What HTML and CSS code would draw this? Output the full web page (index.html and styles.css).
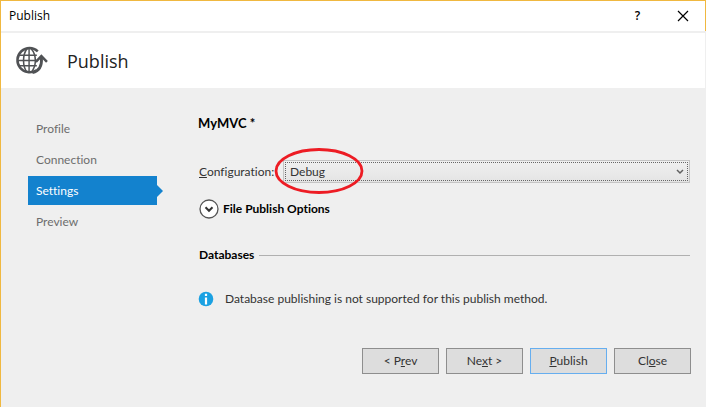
FILE: index.html
```html
<!DOCTYPE html>
<html lang="en">
<head>
<meta charset="utf-8">
<title>Publish</title>
<link rel="stylesheet" href="styles.css">
</head>
<body>
<div class="window">
  <div class="titlebar">
    <span class="titlebar-text">Publish</span>
    <button class="caption-button help" type="button">?</button>
    <button class="caption-button" type="button" aria-label="Close window">
      <svg width="12" height="12" viewBox="0 0 12 12"><path d="M1 1l10 10M11 1L1 11" stroke="#000" stroke-width="1.2" fill="none"/></svg>
    </button>
  </div>
  <header class="header">
    <svg class="globe" width="34" height="30" viewBox="0 0 34 30" fill="none" stroke="#505255">
      <path d="M23.500 5.500A12.500 12.500 0 1 0 22 25" stroke-width="2.600"/>
      <path d="M12.500 2.500C7.500 9 7.500 21 12.500 27.500M16.500 2.500c3.500 4 4.500 8 4.500 12.500s-1.500 9-4.500 12.500" stroke-width="1.600"/>
      <path d="M3.500 9.500h19M2 15h21M3.500 20.500h19M14.500 2v26" stroke-width="1.500"/>
      <path d="M18 27.500c6.500-1.500 10-7 9.300-15.500" stroke-width="2.900"/>
      <path d="M21.500 16.500l5.700-6 5.800 6" stroke-width="2.600"/>
    </svg>
    <h1>Publish</h1>
  </header>
  <div class="body">
    <nav class="steps">
      <a href="#profile">Profile</a>
      <a href="#connection">Connection</a>
      <a href="#settings" class="active" aria-current="step">Settings</a>
      <a href="#preview">Preview</a>
    </nav>
    <main class="content">
      <h2>MyMVC *</h2>
      <div class="field">
        <label for="configuration"><u>C</u>onfiguration:</label>
        <div class="select-box">
          <select id="configuration"><option>Debug</option><option>Release</option></select>
          <svg class="chevron" width="8" height="6" viewBox="0 0 8 6"><path d="M1 1l3 3 3-3" fill="none" stroke="#606060" stroke-width="1.500"/></svg>
          <svg class="marker" width="90" height="48" viewBox="0 0 90 48"><ellipse cx="45" cy="24" rx="43" ry="21.500" fill="none" stroke="#ed1c24" stroke-width="2.800"/></svg>
        </div>
      </div>
      <button class="expander" type="button" aria-expanded="false">
        <svg width="20" height="20" viewBox="0 0 20 20" fill="none"><circle cx="10" cy="10" r="9" fill="#fff" stroke="#555" stroke-width="1.300"/><path d="M6.500 8.300l3.500 3.500 3.500-3.500" stroke="#333" stroke-width="2"/></svg>
        <span>File Publish Options</span>
      </button>
      <h3>Databases</h3>
      <p class="notice">
        <svg width="16" height="16" viewBox="0 0 16 16"><circle cx="8" cy="8" r="7.300" fill="#1ba1e2"/><path d="M8 2.700v2.300M8 6.500v7" stroke="#fff" stroke-width="2.200"/></svg>
        <span>Database publishing is not supported for this publish method.</span>
      </p>
    </main>
  </div>
  <footer class="actions">
    <button type="button">&lt; P<u>r</u>ev</button>
    <button type="button">Ne<u>x</u>t &gt;</button>
    <button type="button" class="default"><u>P</u>ublish</button>
    <button type="button">Cl<u>o</u>se</button>
  </footer>
</div>
</body>
</html>
```
FILE: styles.css
```css
* { box-sizing: border-box; }
body {
  margin: 0;
  font: 12px/16px Lato, "Open Sans", sans-serif;
  font-variant-ligatures: none;
  color: #333;
  background: #efefef;
}
button, select { font: inherit; color: inherit; }
h1, h2, h3, p { margin: 0; }
u { text-underline-offset: 1px; }

.window {
  min-height: 100vh;
  border-left: 1px solid #f0b840;
}
.titlebar {
  display: flex;
  align-items: center;
  height: 31px;
  padding-left: 8px;
  background: #fff;
  border-top: 1px solid #f0b840;
  border-right: 1px solid #f0b840;
  font-family: "Open Sans", sans-serif;
  color: #000;
}
.titlebar-text { flex: 1; }
.caption-button {
  display: grid;
  place-items: center;
  width: 45px;
  height: 28px;
  padding: 0;
  border: 0;
  background: none;
}
.help { font-weight: 600; }
.header {
  display: flex;
  align-items: center;
  gap: 18px;
  height: 57px;
  margin-right: 1px;
  padding-left: 14px;
  border-top: 2px solid #efefef;
  background: #fff;
}
.globe { width: 33px; height: 29px; }
.header h1 {
  padding-left: 1px;
  font: 400 18px/24px "Open Sans", sans-serif;
  color: #222;
}

.body { display: flex; gap: 41px; }
.steps {
  display: flex;
  flex-direction: column;
  gap: 2px;
  width: 129px;
  margin: 26px 0 0 27px;
}
.steps a {
  position: relative;
  height: 29px;
  padding-left: 8px;
  line-height: 29px;
  color: #6d6d6d;
  text-decoration: none;
}
.steps .active { background: #1382ce; color: #fff; }
.steps .active::after {
  content: "";
  position: absolute;
  left: 100%;
  top: 9px;
  border: 6px solid transparent;
  border-left-color: #1382ce;
  border-right: 0;
}

.content {
  flex: 1;
  display: flex;
  flex-direction: column;
  padding: 26px 16px 0 0;
}
.content h2 {
  font-size: 13px;
  line-height: 18px;
  font-weight: 700;
  color: #000;
}
.field {
  display: flex;
  align-items: center;
  gap: 7px;
  margin-top: 28px;
}
.field label { width: 78px; padding-left: 1px; white-space: nowrap; }
.select-box {
  position: relative;
  flex: 1;
  padding: 1px;
  border: 1px solid #c4c4c4;
  background: linear-gradient(#f0f0f0, #e4e4e4);
}
.select-box select {
  display: block;
  appearance: none;
  width: 100%;
  height: 19px;
  padding: 0 4px;
  border: 1px dotted #666;
  border-radius: 0;
  background: none;
  line-height: 16px;
  outline: 0;
}
.chevron {
  position: absolute;
  right: 5px;
  top: 8px;
  pointer-events: none;
}
.marker {
  position: absolute;
  left: -10px;
  top: -14px;
  pointer-events: none;
}
.expander {
  display: flex;
  align-items: center;
  align-self: flex-start;
  gap: 4px;
  margin-top: 16px;
  padding: 0 0 0 1px;
  border: 0;
  background: none;
  font-weight: 700;
  color: #000;
}
.content h3 {
  display: flex;
  align-items: center;
  gap: 5px;
  margin-top: 28px;
  padding-left: 1px;
  font-size: 12px;
  line-height: 16px;
  color: #000;
}
.content h3::after {
  content: "";
  flex: 1;
  height: 1px;
  background: #b0b0b0;
}
.notice {
  display: flex;
  align-items: center;
  gap: 11px;
  margin-top: 28px;
}

.actions {
  display: flex;
  justify-content: flex-end;
  gap: 7px;
  margin-top: 41px;
  padding-right: 15px;
}
.actions button {
  width: 77px;
  height: 26px;
  padding: 0;
  border: 1px solid #8e8e8e;
  background: #ddd;
}
.actions .default { border-color: #66aeef; }
```
